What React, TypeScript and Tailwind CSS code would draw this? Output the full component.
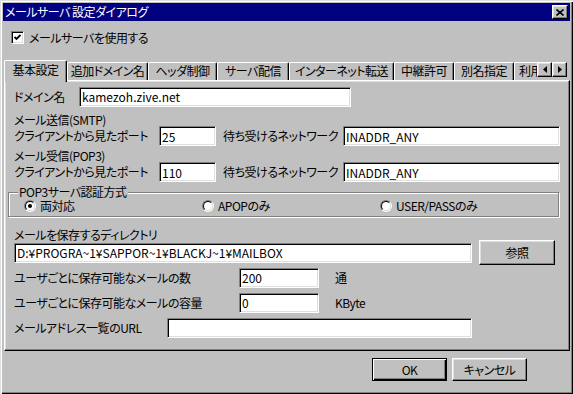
import React from 'react';

const sunken =
  'bg-white border border-t-[#808080] border-l-[#808080] border-b-white border-r-white shadow-[inset_1px_1px_0_#000,inset_-1px_-1px_0_#dfdfdf]';
const raised =
  'bg-[#c0c0c0] border border-t-white border-l-white border-b-black border-r-black shadow-[inset_-1px_-1px_0_#808080,inset_1px_1px_0_#dfdfdf]';

const tabs = [
  { label: '追加ドメイン名', w: 'w-[81px]' },
  { label: 'ヘッダ制御', w: 'w-[69px]' },
  { label: 'サーバ配信', w: 'w-[72px]' },
  { label: 'インターネット転送', w: 'w-[105px]' },
  { label: '中継許可', w: 'w-[60px]' },
  { label: '別名指定', w: 'w-[60px]' },
];

function Field({ value, className = '' }: { value?: string; className?: string }) {
  return (
    <input
      readOnly
      defaultValue={value}
      className={`${sunken} h-[20px] px-[2px] text-[12px] leading-[14px] tracking-normal text-black outline-none ${className}`}
    />
  );
}

function Radio({ label, checked = false }: { label: string; checked?: boolean }) {
  return (
    <div className="flex w-[178px] items-center gap-[4px]">
      <span className="flex h-[12px] w-[12px] rounded-full border border-t-[#808080] border-l-[#808080] border-b-white border-r-white">
        <span className="flex h-full w-full items-center justify-center rounded-full border border-t-black border-l-black border-b-[#dfdfdf] border-r-[#dfdfdf] bg-white">
          {checked && <span className="h-[4px] w-[4px] rounded-full bg-black" />}
        </span>
      </span>
      <span className="whitespace-nowrap leading-[12px]">{label}</span>
    </div>
  );
}

function Arrow({ dir }: { dir: 'left' | 'right' }) {
  return (
    <div className={`${raised} flex h-[15px] w-[15px] items-center justify-center`}>
      <svg width="4" height="7" viewBox="0 0 4 7">
        <polygon points={dir === 'left' ? '4,0 0,3.5 4,7' : '0,0 4,3.5 0,7'} fill="#000" />
      </svg>
    </div>
  );
}

export default function App() {
  return (
    <div className="flex h-[394px] w-[573px] flex-col whitespace-nowrap bg-[#c0c0c0] p-[3px] font-['Noto_Sans_CJK_JP',sans-serif] text-[12px] leading-[12px] tracking-[-0.5px] text-black [font-feature-settings:'palt'] shadow-[inset_1px_1px_0_#dfdfdf,inset_2px_2px_0_#fff,inset_-1px_-1px_0_#000,inset_-2px_-2px_0_#808080]">
      {/* title bar */}
      <div className="flex h-[18px] items-center justify-between bg-[#000080] pl-[2px] pr-[2px] text-white">
        <span>メールサーバ 設定ダイアログ</span>
        <div className={`${raised} flex h-[14px] w-[16px] items-center justify-center`}>
          <svg width="8" height="7" viewBox="0 0 8 7">
            <path d="M0.5 0.5 L7.5 6.5 M7.5 0.5 L0.5 6.5" stroke="#000" strokeWidth="1.6" />
          </svg>
        </div>
      </div>

      {/* enable checkbox */}
      <div className="ml-[8px] mt-[10px] flex h-[13px] items-center gap-[5px]">
        <span className={`${sunken} flex h-[13px] w-[13px] items-center justify-center`}>
          <svg width="7" height="7" viewBox="0 0 7 7">
            <path d="M0.5 3 L2.5 5 L6.5 1" stroke="#000" strokeWidth="1.9" fill="none" />
          </svg>
        </span>
        <span>メールサーバを使用する</span>
      </div>

      {/* tabs */}
      <div className="relative z-10 -mb-[2px] ml-[1px] mt-[16px] flex h-[22px] w-[566px]">
        <div className="flex w-[533px] overflow-hidden">
          <div className="flex h-[22px] w-[63px] shrink-0 justify-center rounded-t-[2px] border-l border-t border-r border-l-white border-t-white border-r-black bg-[#c0c0c0] pt-[3px] shadow-[inset_-1px_0_0_#808080]">
            基本設定
          </div>
          {tabs.map((t) => (
            <div
              key={t.label}
              className={`${t.w} mt-[2px] flex h-[18px] shrink-0 justify-center rounded-t-[2px] border-l border-t border-r border-l-white border-t-white border-r-black pt-[2px] shadow-[inset_-1px_0_0_#808080]`}
            >
              {t.label}
            </div>
          ))}
          <div className="mt-[2px] flex h-[18px] w-[23px] shrink-0 overflow-hidden rounded-tl-[2px] border-l border-t border-l-white border-t-white pl-[4px] pt-[2px]">
            利用
          </div>
        </div>
        <div className="mt-[2px] flex">
          <Arrow dir="left" />
          <Arrow dir="right" />
        </div>
      </div>

      {/* tab panel */}
      <div className="ml-[1px] flex h-[271px] w-[566px] flex-col border border-t-white border-l-white border-b-black border-r-black pl-[9px] pt-[6px] shadow-[inset_-1px_-1px_0_#808080,inset_1px_1px_0_#dfdfdf]">
        <div className="flex h-[19px] items-center">
          <span className="w-[65px]">ドメイン名</span>
          <Field value="kamezoh.zive.net" className="h-[19px] w-[272px]" />
        </div>

        <div className="h-[20px] pt-[8px]">メール送信(SMTP)</div>
        <div className="flex h-[20px] items-center">
          <span className="w-[145px]">クライアントから見たポート</span>
          <Field value="25" className="w-[57px]" />
          <span className="ml-[7px] w-[120px]">待ち受けるネットワーク</span>
          <Field value="INADDR_ANY" className="w-[217px]" />
        </div>

        <div className="h-[16px] pt-[4px]">メール受信(POP3)</div>
        <div className="flex h-[20px] items-center">
          <span className="w-[145px]">クライアントから見たポート</span>
          <Field value="110" className="w-[57px]" />
          <span className="ml-[7px] w-[120px]">待ち受けるネットワーク</span>
          <Field value="INADDR_ANY" className="w-[217px]" />
        </div>

        <div className="relative -ml-[6px] mt-[10px] flex h-[25px] w-[551px] border border-[#808080] pl-[15px] pt-[4px] shadow-[1px_1px_0_#fff,inset_1px_1px_0_#fff]">
          <span className="absolute -top-[7px] left-[9px] bg-[#c0c0c0] px-[1px] leading-[11px]">POP3サーバ認証方式</span>
          <div className="flex h-[18px] items-center">
            <Radio label="両対応" checked />
            <Radio label="APOPのみ" />
            <Radio label="USER/PASSのみ" />
          </div>
        </div>

        <div className="h-[23px] pt-[12px]">メールを保存するディレクトリ</div>
        <div className="flex h-[25px] items-center">
          <Field value="D:¥PROGRA~1¥SAPPOR~1¥BLACKJ~1¥MAILBOX" className="w-[458px]" />
          <button className={`${raised} ml-[7px] h-[25px] w-[76px]`}>参照</button>
        </div>

        <div className="flex h-[25px] items-center">
          <span className="w-[225px]">ユーザごとに保存可能なメールの数</span>
          <Field value="200" className="w-[80px]" />
          <span className="ml-[16px]">通</span>
        </div>
        <div className="flex h-[25px] items-center">
          <span className="w-[225px]">ユーザごとに保存可能なメールの容量</span>
          <Field value="0" className="w-[80px]" />
          <span className="ml-[16px]">KByte</span>
        </div>
        <div className="flex h-[25px] items-center">
          <span className="w-[153px]">メールアドレス一覧のURL</span>
          <Field className="w-[305px]" />
        </div>
      </div>

      {/* buttons */}
      <div className="mt-[7px] flex justify-end gap-[5px] pr-[43px]">
        <button className="h-[23px] w-[75px] border border-black bg-[#c0c0c0] shadow-[inset_1px_1px_0_#fff,inset_-1px_-1px_0_#000,inset_-2px_-2px_0_#808080]">
          OK
        </button>
        <button className={`${raised} h-[23px] w-[75px]`}>キャンセル</button>
      </div>
    </div>
  );
}
